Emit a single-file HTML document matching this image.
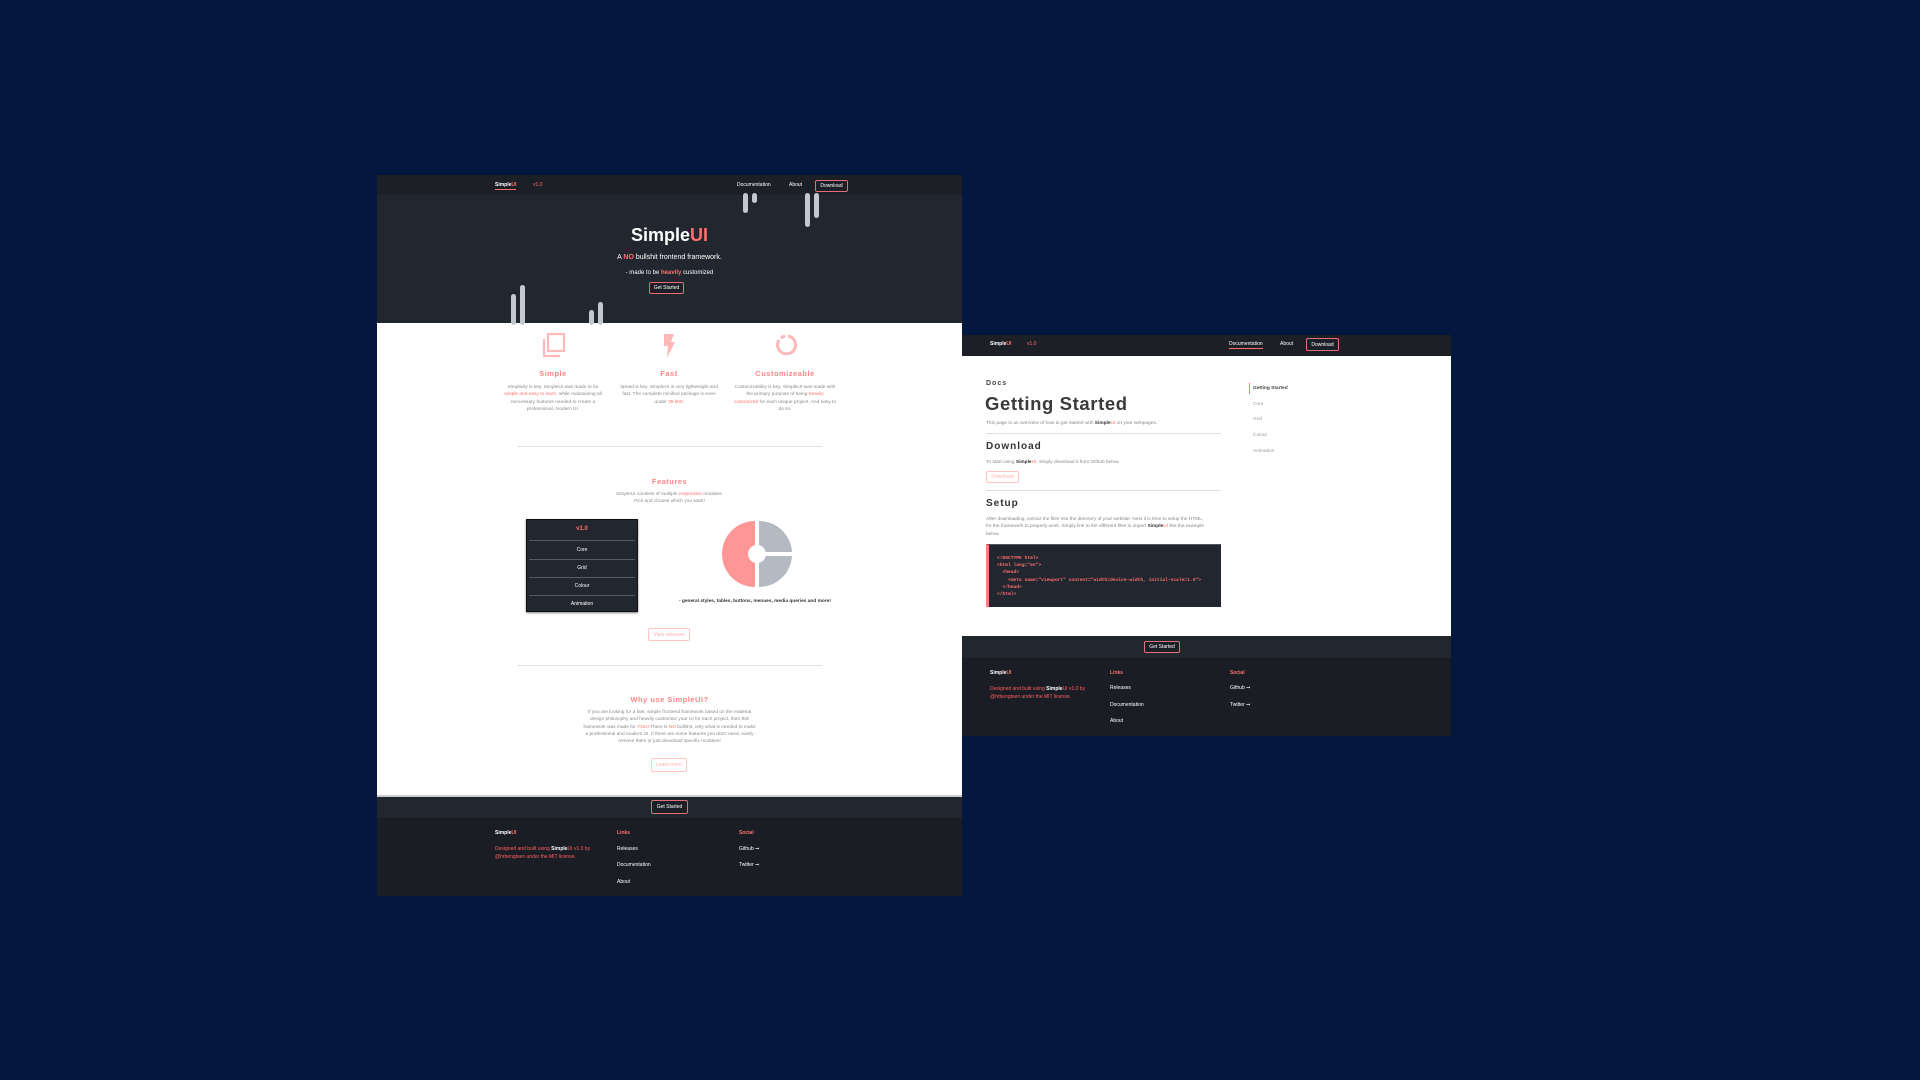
<!DOCTYPE html>
<html><head><meta charset="utf-8">
<style>
*{margin:0;padding:0;box-sizing:border-box}
body{width:1920px;height:1080px;background:#03173f;position:relative;overflow:hidden;font-family:"Liberation Sans",sans-serif}
.a{position:absolute;white-space:nowrap}
.c{text-align:center}
.w{color:#fff}
.bar{position:absolute;width:5px;background:#c4c7ce;border-radius:3px}
.btn{position:absolute;border:1px solid #e0707a;border-radius:2px;font-size:5px;display:flex;align-items:center;justify-content:center}
.p{font-size:4.8px;line-height:7.3px;color:#8a8a8a;text-align:center;position:absolute;white-space:nowrap}
.ft{font-size:5px;color:#fff;position:absolute;white-space:nowrap}
.pk,.ft.pk{color:#ff6f6f}
</style></head><body>

<!-- LEFT MOCKUP -->
<div class="a" style="left:377px;top:175px;width:585px;height:721px;background:#fff"></div>
<div class="a" style="left:377px;top:175px;width:585px;height:20px;background:#1c1f26"></div>
<div class="a" style="left:377px;top:195px;width:585px;height:128px;background:#22262e"></div>
<div class="ft" style="left:495px;top:182px;font-weight:bold;border-bottom:1px solid #ff6f6f;padding-bottom:1px">Simple<span class="pk">UI</span></div>
<div class="ft pk" style="left:533px;top:182px">v1.0</div>
<div class="ft" style="left:737px;top:182px">Documentation</div>
<div class="ft" style="left:789px;top:182px">About</div>
<div class="btn w" style="left:815px;top:180px;width:33px;height:12px;background:#1c1f26">Download</div>

<div class="bar" style="left:743px;top:193px;height:20px"></div>
<div class="bar" style="left:752px;top:193px;height:10px"></div>
<div class="bar" style="left:805px;top:193px;height:34px"></div>
<div class="bar" style="left:814px;top:193px;height:25px"></div>
<div class="bar" style="left:511px;top:294px;height:31px"></div>
<div class="bar" style="left:520px;top:285px;height:40px"></div>
<div class="bar" style="left:589px;top:310px;height:15px"></div>
<div class="bar" style="left:598px;top:302px;height:23px"></div>

<div class="a c w" style="left:377px;width:585px;top:225px;font-size:18px;font-weight:bold">Simple<span class="pk">UI</span></div>
<div class="a c w" style="left:377px;width:585px;top:254px;font-size:7px">A <b class="pk">NO</b> bullshit frontend framework.</div>
<div class="a c w" style="left:377px;width:585px;top:270px;font-size:6px">- made to be <b class="pk">heavily</b> customized</div>
<div class="btn w" style="left:649px;top:282px;width:35px;height:12px;background:#1c1f26">Get Started</div>

<!-- feature icons -->
<svg class="a" style="left:541px;top:332px" width="26" height="27" viewBox="0 0 26 27"><rect x="7" y="2" width="16" height="17" fill="none" stroke="#ffb8b8" stroke-width="2.2"/><path d="M3 7V24H19" fill="none" stroke="#ffb8b8" stroke-width="2.2"/></svg>
<svg class="a" style="left:661px;top:333px" width="16" height="26" viewBox="0 0 16 26"><path d="M3 1H13L10 9H14L6 25L7 13H3Z" fill="#ffb8b8"/></svg>
<svg class="a" style="left:774px;top:333px" width="24" height="24" viewBox="0 0 24 24"><path d="M14 3A9 9 0 1 1 5 7" fill="none" stroke="#ffb8b8" stroke-width="3"/><path d="M7 5A9 9 0 0 1 11 3" fill="none" stroke="#ffb8b8" stroke-width="3"/></svg>

<div class="a c" style="left:503px;width:100px;top:369px;font-size:7.5px;font-weight:bold;letter-spacing:.5px;color:#ff8585">Simple</div>
<div class="a c" style="left:619px;width:100px;top:369px;font-size:7.5px;font-weight:bold;letter-spacing:.5px;color:#ff8585">Fast</div>
<div class="a c" style="left:735px;width:100px;top:369px;font-size:7.5px;font-weight:bold;letter-spacing:.5px;color:#ff8585">Customizeable</div>
<div class="p" style="left:493px;width:120px;top:384px">Simplicity is key. SimpleUI was made to be<br><span class="pk">simple and easy to learn</span>, while maintaining all<br>neccessary features needed to create a<br>professional, modern UI.</div>
<div class="p" style="left:609px;width:120px;top:384px">Speed is key. SimpleUI is very lightweight and<br>fast. The complete minified package is even<br>under <span class="pk">35 kbs!</span></div>
<div class="p" style="left:725px;width:120px;top:384px">Customizability is key. SimpleUI was made with<br>the primary purpose of being <span class="pk">heavily</span><br><span class="pk">customized</span> for each unique project. And easy to<br>do so.</div>

<div class="a" style="left:517px;top:446px;width:305px;height:1px;background:#e2e2e2"></div>
<div class="a c" style="left:377px;width:585px;top:477px;font-size:7.5px;font-weight:bold;color:#ff8585;letter-spacing:.5px">Features</div>
<div class="p" style="left:377px;width:585px;top:491px">SimpleUI consists of multiple <span class="pk">responsive</span> modules.<br>Pick and choose which you want!</div>

<div class="a" style="left:526px;top:519px;width:112px;height:93px;background:#22262e;box-shadow:0 1px 2px rgba(0,0,0,.5);border:1px solid #111"></div>
<div class="a c pk" style="left:526px;width:112px;top:526px;font-size:6px;font-weight:bold">v1.0</div>
<div class="a" style="left:529px;top:540px;width:106px;height:1px;background:#555a63"></div>
<div class="a" style="left:529px;top:559px;width:106px;height:1px;background:#555a63"></div>
<div class="a" style="left:529px;top:577px;width:106px;height:1px;background:#555a63"></div>
<div class="a" style="left:529px;top:595px;width:106px;height:1px;background:#555a63"></div>
<div class="a c w" style="left:526px;width:112px;top:547px;font-size:5px">Core</div>
<div class="a c w" style="left:526px;width:112px;top:565px;font-size:5px">Grid</div>
<div class="a c w" style="left:526px;width:112px;top:583px;font-size:5px">Colour</div>
<div class="a c w" style="left:526px;width:112px;top:601px;font-size:5px">Animation</div>

<svg class="a" style="left:722px;top:519px" width="70" height="70" viewBox="0 0 70 70"><path d="M33 2A33 33 0 0 0 33 68Z" fill="#ff9696"/><path d="M37 2A33 33 0 0 1 70 33H37Z" fill="#b5b9c2"/><path d="M37 37H70A33 33 0 0 1 37 68Z" fill="#b5b9c2"/><circle cx="35" cy="35" r="9" fill="#fff"/></svg>
<div class="a" style="left:679px;top:599px;font-size:4.8px;font-weight:bold;color:#333">- general styles, tables, buttons, menues, media queries and more!</div>

<div class="btn" style="left:648px;top:628px;width:42px;height:13px;border-color:#ffc5c5;color:#ffb0b0">View releases</div>
<div class="a" style="left:517px;top:665px;width:305px;height:1px;background:#e2e2e2"></div>
<div class="a c" style="left:377px;width:585px;top:695px;font-size:7.5px;font-weight:bold;color:#ff8585;letter-spacing:.5px">Why use SimpleUI?</div>
<div class="p" style="left:377px;width:585px;top:709px">If you are looking for a fast, simple frontend framework based on the material<br>design philosophy and heavily customize your UI for each project, then this<br>framework was made for <span class="pk">YOU!</span> There is <span class="pk">NO</span> bullshit, only what is needed to make<br>a professional and modern UI. If there are some features you don't need, easily<br>remove them or just download specific modules!</div>
<div class="btn" style="left:651px;top:758px;width:36px;height:14px;border-color:#ffc5c5;color:#ffb0b0">Learn more</div>

<div class="a" style="left:377px;top:795px;width:585px;height:2px;background:#ccc"></div>
<div class="a" style="left:377px;top:797px;width:585px;height:21px;background:#22262e"></div>
<div class="btn w" style="left:651px;top:800px;width:37px;height:14px;background:#1c1f26">Get Started</div>
<div class="a" style="left:377px;top:818px;width:585px;height:78px;background:#1a1d23"></div>
<div class="ft" style="left:495px;top:830px;font-weight:bold">Simple<span class="pk">UI</span></div>
<div class="ft" style="left:495px;top:846px;line-height:7.5px;color:#ff5f5f">Designed and built using <b style="color:#fff">Simple</b>UI v1.0 by<br>@hrbengtsen under the MIT license.</div>
<div class="ft pk" style="left:617px;top:830px;font-weight:bold">Links</div>
<div class="ft" style="left:617px;top:846px">Releases</div>
<div class="ft" style="left:617px;top:862px">Documentation</div>
<div class="ft" style="left:617px;top:879px">About</div>
<div class="ft pk" style="left:739px;top:830px;font-weight:bold">Social</div>
<div class="ft" style="left:739px;top:846px">Github ➞</div>
<div class="ft" style="left:739px;top:862px">Twitter ➞</div>

<!-- RIGHT MOCKUP -->
<div class="a" style="left:962px;top:335px;width:489px;height:401px;background:#fff"></div>
<div class="a" style="left:962px;top:335px;width:489px;height:21px;background:#1c1f26"></div>
<div class="ft" style="left:990px;top:341px;font-weight:bold">Simple<span class="pk">UI</span></div>
<div class="ft pk" style="left:1027px;top:341px">v1.0</div>
<div class="ft" style="left:1229px;top:341px;border-bottom:1px solid #ff6f6f;padding-bottom:1px">Documentation</div>
<div class="ft" style="left:1280px;top:341px">About</div>
<div class="btn w" style="left:1306px;top:338px;width:33px;height:13px;background:#1c1f26">Download</div>

<div class="a" style="left:986px;top:380px;font-size:7px;font-weight:bold;color:#444;letter-spacing:1px">Docs</div>
<div class="a" style="left:985px;top:393px;font-size:18.5px;font-weight:bold;color:#3a3a3a;letter-spacing:.6px">Getting Started</div>
<div class="a" style="left:986px;top:421px;font-size:4.8px;color:#888">This page is an overview of how to get started with <b style="color:#333">Simple</b><span class="pk">UI</span> on your webpages.</div>
<div class="a" style="left:986px;top:433px;width:235px;height:1px;background:#ddd"></div>
<div class="a" style="left:986px;top:441px;font-size:10px;font-weight:bold;color:#333;letter-spacing:1px">Download</div>
<div class="a" style="left:986px;top:460px;font-size:4.8px;color:#888">To start using <b style="color:#333">Simple</b><span class="pk">UI</span>, simply download it from Github below.</div>
<div class="btn" style="left:986px;top:471px;width:33px;height:12px;border-color:#ffc5c5;color:#ffb0b0">Download</div>
<div class="a" style="left:986px;top:490px;width:235px;height:1px;background:#ddd"></div>
<div class="a" style="left:986px;top:498px;font-size:10px;font-weight:bold;color:#333;letter-spacing:1px">Setup</div>
<div class="a" style="left:986px;top:516px;font-size:4.8px;line-height:7.3px;color:#888">After downloading, extract the files into the directory of your website. Next it is time to setup the HTML,<br>for the framework to properly work. Simply link to the different files to import <b style="color:#333">Simple</b><span class="pk">UI</span> like the example<br>below.</div>
<div class="a" style="left:986px;top:544px;width:235px;height:63px;background:#22262e;border-left:3px solid #ff7b7b;border-top:1px solid #555"></div>
<div class="a" style="left:997px;top:555px;font-family:'Liberation Mono',monospace;font-size:4.6px;line-height:7.2px;color:#ff6f6f;font-weight:bold;white-space:pre">&lt;!DOCTYPE html&gt;
&lt;html lang="en"&gt;
  &lt;head&gt;
    &lt;meta name="viewport" content="width=device-width, initial-scale=1.0"&gt;
  &lt;/head&gt;
&lt;/html&gt;</div>

<div class="a" style="left:1249px;top:383px;width:1px;height:11px;background:#ff7b7b"></div>
<div class="a" style="left:1253px;top:386px;font-size:4.8px;color:#444;font-weight:bold">Getting Started</div>
<div class="a" style="left:1253px;top:402px;font-size:4.8px;color:#999">Core</div>
<div class="a" style="left:1253px;top:417px;font-size:4.8px;color:#999">Grid</div>
<div class="a" style="left:1253px;top:433px;font-size:4.8px;color:#999">Colour</div>
<div class="a" style="left:1253px;top:449px;font-size:4.8px;color:#999">Animation</div>

<div class="a" style="left:962px;top:636px;width:489px;height:22px;background:#22262e"></div>
<div class="btn w" style="left:1144px;top:641px;width:36px;height:12px;background:#1c1f26">Get Started</div>
<div class="a" style="left:962px;top:658px;width:489px;height:78px;background:#1a1d23"></div>
<div class="ft" style="left:990px;top:670px;font-weight:bold">Simple<span class="pk">UI</span></div>
<div class="ft" style="left:990px;top:686px;line-height:7.5px;color:#ff5f5f">Designed and built using <b style="color:#fff">Simple</b>UI v1.0 by<br>@hrbengtsen under the MIT license.</div>
<div class="ft pk" style="left:1110px;top:670px;font-weight:bold">Links</div>
<div class="ft" style="left:1110px;top:685px">Releases</div>
<div class="ft" style="left:1110px;top:702px">Documentation</div>
<div class="ft" style="left:1110px;top:718px">About</div>
<div class="ft pk" style="left:1230px;top:670px;font-weight:bold">Social</div>
<div class="ft" style="left:1230px;top:685px">Github ➞</div>
<div class="ft" style="left:1230px;top:702px">Twitter ➞</div>
</body></html>
